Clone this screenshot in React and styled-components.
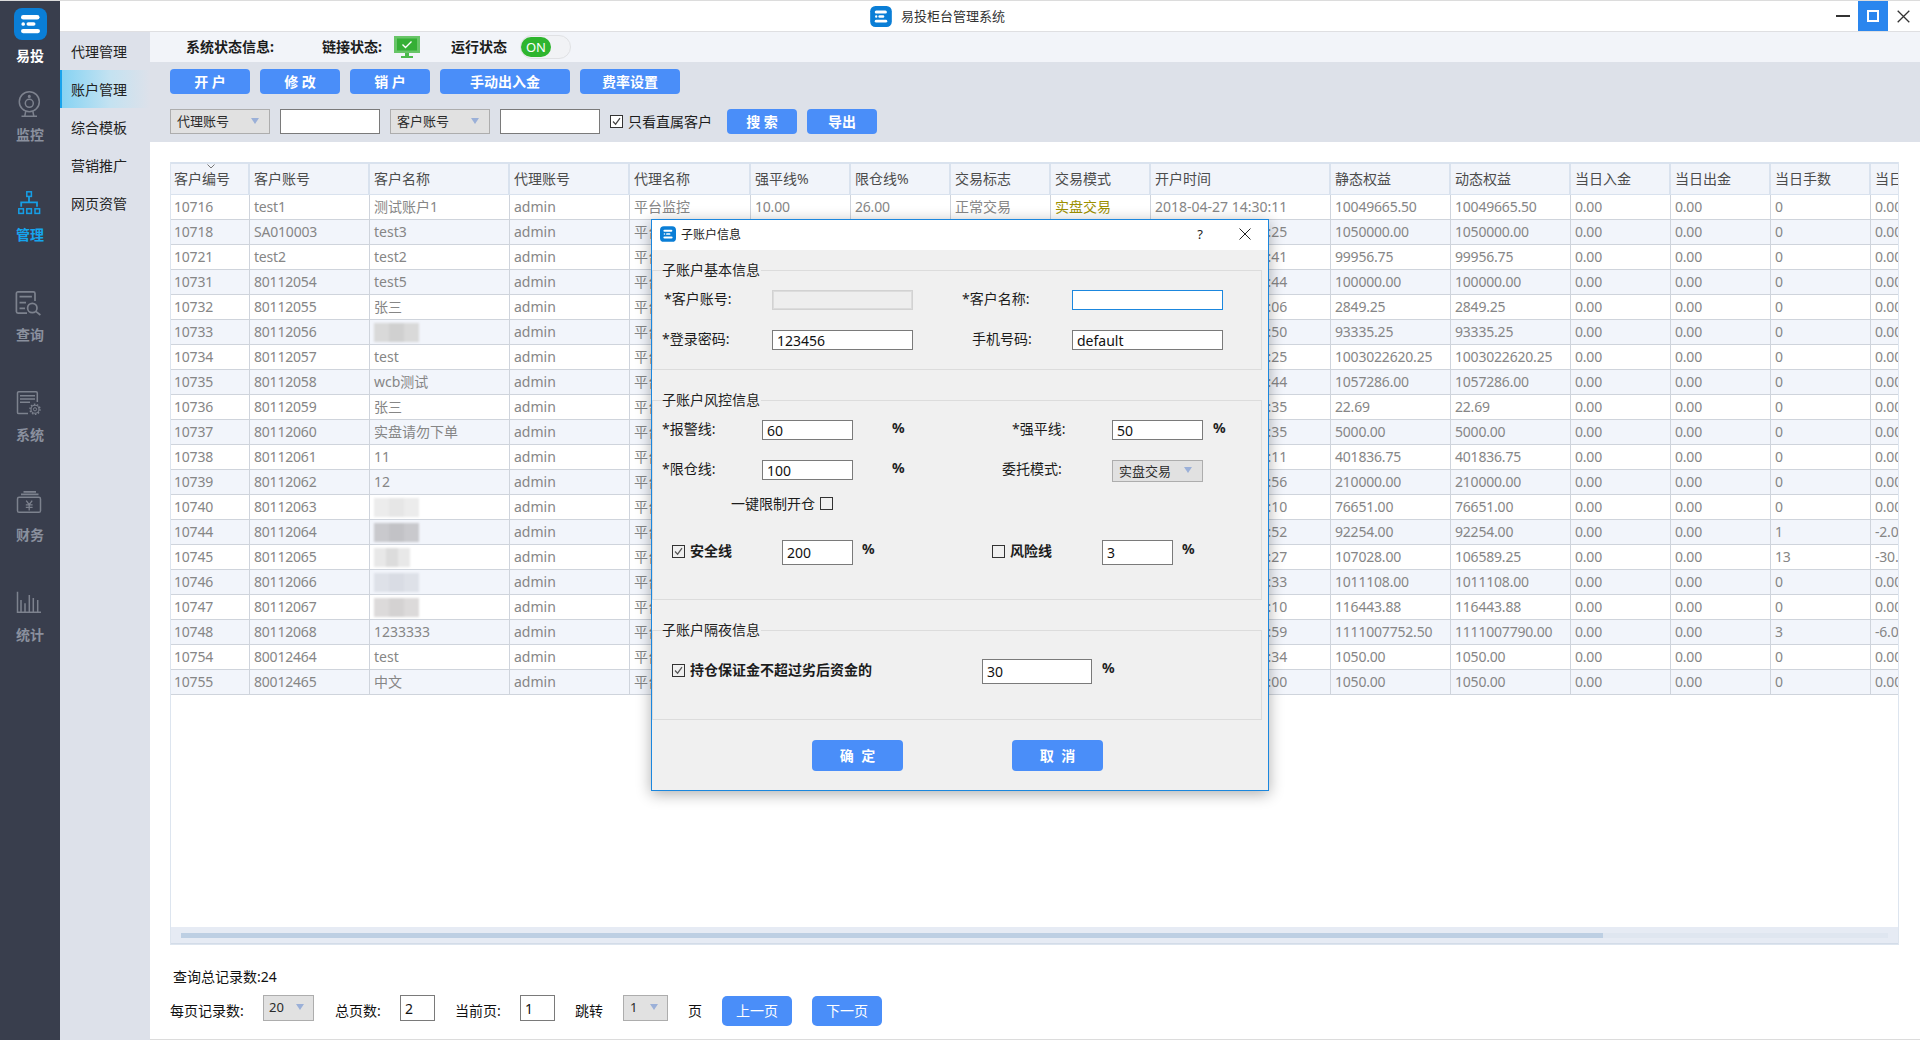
import React from 'react';
import styled, { createGlobalStyle } from 'styled-components';

const Global = createGlobalStyle`
  html, body { margin: 0; padding: 0; background: #fff; }
  * { box-sizing: border-box; }
  body { font-family: "Noto Sans", "Noto Sans CJK SC", sans-serif; font-size: 14px; color: #222; }
`;

const BLUE = '#4a8ef9';

const Root = styled.div`
  position: relative; width: 1920px; height: 1040px; overflow: hidden;
  display: flex; border-top: 1px solid #dcdcdc;
`;
const Sidebar = styled.aside`
  width: 60px; flex: none; background: #393e4d; padding-top: 7px;
  display: flex; flex-direction: column; align-items: center;
`;
const BrandItem = styled.div`
  height: 70px; display: flex; flex-direction: column; align-items: center; gap: 6px;
`;
const SideItem = styled.div`
  height: 100px; width: 60px; padding-top: 12px; display: flex; flex-direction: column; align-items: center;
  color: ${p => (p.$active ? '#16a5ee' : '#8a909e')};
`;
const SideIcon = styled.svg`
  width: 24px; height: 28px; margin-bottom: 7px; overflow: visible; fill: none;
  stroke: ${p => (p.$active ? '#169fe6' : '#7d828e')}; stroke-width: 1.5;
`;
const SideLabel = styled.span`
  font-size: 14px; line-height: 20px; font-weight: 700; color: ${p => (p.$light ? '#fff' : 'inherit')};
`;
const Main = styled.div`flex: 1; display: flex; flex-direction: column; min-width: 0;`;
const TitleBar = styled.header`
  height: 30px; flex: none; background: #fff; display: flex; align-items: center; padding-left: 810px;
`;
const AppTitle = styled.span`font-size: 13px; color: #333; margin-left: 9px; line-height: 18px;`;
const WinControls = styled.div`margin-left: auto; margin-right: 2px; display: flex; height: 30px;`;
const WinBtn = styled.div`
  width: 30px; height: 30px; display: flex; align-items: center; justify-content: center;
  background: ${p => (p.$active ? '#2a86ee' : 'transparent')};
`;
const Work = styled.div`flex: 1; display: flex; min-height: 0; border-top: 1px solid #dfdfe2;`;
const SubNav = styled.nav`width: 90px; flex: none; background: #dde1ea;`;
const SubItem = styled.div`
  height: 38px; padding-left: ${p => (p.$active ? '9px' : '11px')}; display: flex; align-items: center;
  font-size: 14px; color: #222;
  ${p => p.$active && 'border-left: 2px solid #18a3ec; background: linear-gradient(90deg, #86d3f3 0%, #c4e2f1 55%, #dde1ea 100%);'}
`;
const Panel = styled.div`flex: 1; display: flex; flex-direction: column; min-width: 0;`;
const StatusBar = styled.div`
  height: 30px; flex: none; background: #f2f4f9; display: flex; align-items: center; padding-left: 36px;
`;
const StatusText = styled.span`
  width: ${p => p.$w}px; flex: none; font-size: 14px; font-weight: 700; color: #1c1c1c; line-height: 20px; white-space: nowrap;
`;
const ScreenIcon = styled.svg`width: 26px; height: 22px; flex: none; margin-right: 31px;`;
const Toggle = styled.div`
  width: 51px; height: 24px; flex: none; border: 1px solid #e0e1e4; border-radius: 12px; background: #f1f2f5; padding: 1px 0;
`;
const ToggleKnob = styled.div`
  width: 30px; height: 20px; border-radius: 10px; background: #2eb52e; color: #fff; font-size: 13px; line-height: 20px; text-align: center;
`;
const Toolbar = styled.div`
  height: 80px; flex: none; background: #dde1e9; padding: 7px 20px 0; display: flex; flex-direction: column; gap: 15px;
`;
const ToolRow = styled.div`display: flex; gap: 10px; height: 25px; align-items: center;`;
const Action = styled.div`
  width: ${p => p.$w}px; height: 25px; flex: none; border-radius: 4px; background: ${BLUE}; color: #fff;
  font-size: 14px; font-weight: 700; line-height: 25px; text-align: center; white-space: pre;
`;
const ComboBox = styled.div`
  width: ${p => p.$w}px; height: ${p => p.$h || 25}px; flex: none; background: #e1e1e1; border: 1px solid #adadad;
  display: flex; align-items: center; justify-content: space-between; padding: 0 ${p => p.$pr || 10}px 2px ${p => p.$pl || 6}px;
  font-size: 13px; color: #2a2a2a; align-self: flex-start;
`;
const Caret = styled.i`
  display: block; width: 0; height: 0; border-left: 4px solid transparent; border-right: 4px solid transparent;
  border-top: 6px solid #9bb0d8;
`;
const TextField = styled.input`
  width: ${p => p.$w}px; height: ${p => p.$h || 25}px; flex: none; background: ${p => (p.$off ? '#eeeeee' : '#fff')};
  border: 1px solid ${p => (p.$focus ? '#1b87de' : p.$off ? '#d2d2d2' : '#7a7a7a')}; ${p => p.$off && 'outline: 1px solid #dcdcdc; outline-offset: -2px;'}
  padding: 0 0 0 4px; margin: 0; font: 14px "Noto Sans", "Noto Sans CJK SC", sans-serif; color: #111; border-radius: 0; align-self: flex-start;
`;
const BoxMark = styled.span`
  width: 13px; height: 13px; flex: none; display: flex; align-items: center; justify-content: center;
  border: 1px solid #333; background: ${p => p.$bg || 'transparent'}; margin-top: ${p => p.$mt || 0}px;
`;
const CheckText = styled.span`font-size: 14px; color: #1c1c1c; margin-left: ${p => p.$ml || 5}px; line-height: 20px; white-space: nowrap; margin-right: 5px;`;
const Content = styled.div`
  flex: 1; background: #fff; padding: 20px 21px 0 20px; display: flex; flex-direction: column; border-bottom: 1px solid #dcdcdc; min-height: 0;
`;
const TableWrap = styled.div`
  height: 783px; flex: none; border: 1px solid #dde5ef; border-top: 0; display: flex; flex-direction: column; overflow: hidden; position: relative;
`;
const TableBody = styled.div`flex: 1; min-height: 0;`;
const GRID = '79px 120px 140px 120px 121px 100px 100px 100px 100px 180px 120px 120px 100px 100px 100px 100px';
const HeadRow = styled.div`
  display: grid; grid-template-columns: ${GRID}; height: 33px; background: #f1f4fa;
  border-top: 2px solid #d9e2ee; border-bottom: 1px solid #d9e2ee; position: relative;
`;
const HeadCell = styled.div`
  border-right: 2px solid #d9e2ee; padding-left: 4px; line-height: 30px; font-size: 14px; color: #4c4c4c; white-space: nowrap; overflow: hidden;
  &:first-child { padding-left: 3px; }
`;
const SortMark = styled.svg`position: absolute; left: 36px; top: 0; width: 8px; height: 5px;`;
const DataRow = styled.div`
  display: grid; grid-template-columns: ${GRID}; height: 25px; background: ${p => (p.$odd ? '#f2f5fb' : '#fff')}; border-bottom: 1px solid #cfd4dc;
`;
const DataCell = styled.div`
  border-right: 1px solid #cfd4dc; padding-left: 4px; line-height: 24px; font-size: 14px; color: ${p => p.$c || '#868686'}; white-space: nowrap; overflow: hidden;
  letter-spacing: ${p => (p.$num ? '-0.2px' : '0')};
  &:first-child { padding-left: 3px; }
`;
const Smudge = styled.span`
  display: block; width: ${p => p.$w || 45}px; height: 19px; margin: 3px 0 0 0; filter: blur(1px);
  background: linear-gradient(90deg, ${p => p.$a} 0 33%, ${p => p.$b} 33% 66%, ${p => p.$a} 66% 100%);
`;
const ScrollTrack = styled.div`height: 17px; flex: none; background: #e6ebf4; padding: 6px 10px; border-bottom: 1px solid #d3dce8;`;
const ScrollGroove = styled.div`height: 5px; background: #dfe6f0;`;
const ScrollThumb = styled.div`height: 5px; background: #bdcfe3;`;
const TotalLine = styled.div`font-size: 14px; color: #111; margin: 22px 0 8px 3px; line-height: 20px;`;
const Pager = styled.div`display: flex; align-items: center; height: 31px; color: #111;`;
const PagerText = styled.span`margin-left: ${p => p.$ml || 0}px; font-size: 14px; line-height: 20px; white-space: nowrap; width: ${p => p.$w}px; flex: none;`;
const PagerBtn = styled.div`
  width: 70px; height: 30px; flex: none; margin-left: ${p => p.$ml}px; border-radius: 5px; background: ${BLUE}; color: #fff; font-size: 14px;
  line-height: 30px; text-align: center; align-self: flex-end;
`;
const Spaced = styled.div`flex: none; margin-left: ${p => p.$ml}px; align-self: flex-start;`;

const Dialog = styled.section`
  position: absolute; left: 651px; top: 218px; width: 618px; height: 572px; border: 1px solid #1b87de; background: #f0f0f0;
  box-shadow: 0 3px 14px rgba(0,0,0,.32); display: flex; flex-direction: column;
`;
const DialogHead = styled.div`height: 30px; flex: none; background: #fff; display: flex; align-items: center; padding: 0 17px 2px 8px;`;
const DialogTitle = styled.span`font-size: 12px; color: #222; margin-left: 5px;`;
const Help = styled.span`margin-left: auto; margin-right: 36px; font-size: 13px; color: #222;`;
const Group = styled.fieldset`
  position: relative; margin: ${p => p.$mt}px 6px 0 0; height: ${p => p.$h}px; padding: ${p => p.$pt}px 0 0 0;
  border: 1px solid #dcdcdc; min-width: 0; display: block;
`;
const GroupTitle = styled.span`
  position: absolute; left: 9px; top: -11px; background: #f0f0f0; font-size: 14px; line-height: 20px; color: #222; padding-right: 1px;
`;
const FormRow = styled.div`display: flex; align-items: center; height: ${p => p.$h || 20}px; margin-top: ${p => p.$mt || 0}px;`;
const FieldLabel = styled.span`
  width: ${p => p.$w}px; padding-left: ${p => p.$pl}px; flex: none; font-size: 14px; color: #1c1c1c; line-height: 20px; white-space: nowrap; margin-top: -3px;
`;
const Pct = styled.span`
  width: ${p => p.$w}px; padding-left: ${p => p.$pl}px; flex: none; font-size: 14px; font-weight: 700; color: #222; line-height: 20px; margin-top: ${p => p.$mt ?? -5}px;
`;
const BoldLabel = styled.span`
  width: ${p => p.$w}px; margin-left: 5px; flex: none; font-size: 14px; font-weight: 700; color: #1c1c1c; line-height: 20px; margin-top: -4px; white-space: nowrap;
`;
const CheckSlot = styled.span`flex: none; margin-left: ${p => p.$ml || 0}px; display: flex;`;
const DialogActions = styled.div`display: flex; gap: 109px; margin: 20px 0 0 160px;`;
const DialogBtn = styled.div`
  width: 91px; height: 31px; border-radius: 4px; background: ${BLUE}; color: #fff; font-size: 14px; font-weight: 700; line-height: 31px; text-align: center; white-space: pre;
`;

const Logo = ({ w, h }) => (
  <svg width={w} height={h} viewBox="0 0 33 32">
    <rect width="33" height="32" rx="8" fill="#0a7ed6" />
    <rect x="7" y="7" width="18.5" height="4.6" rx="2.3" fill="#fff" />
    <rect x="7.5" y="14.2" width="3.4" height="3.6" rx="1.6" fill="#fff" />
    <rect x="12.5" y="14.2" width="9" height="3.6" rx="1.8" fill="#fff" />
    <rect x="7" y="21" width="19" height="4.2" rx="2.1" fill="#fff" />
  </svg>
);
const Check = ({ on }) => (
  <BoxMark $mt={-3}>{on && (
    <svg width="9" height="9" viewBox="0 0 9 9"><path d="M1 4.5L3.6 7.2 8 1.2" fill="none" stroke="#555" strokeWidth="1.2" /></svg>
  )}</BoxMark>
);

const icons = {
  monitor: (
    <>
      <circle cx="11.3" cy="11.7" r="10" />
      <circle cx="11.3" cy="13.3" r="4" />
      <circle cx="11.3" cy="6.4" r=".8" />
      <path d="M7.8 21l-1 5M14.8 21l1 5M3.5 26.2h15.5" />
    </>
  ),
  manage: (
    <>
      <rect x="8.8" y="1.8" width="4.6" height="4.6" />
      <path d="M11 6.4V12M3.2 16.8V12.4H19V16.8" strokeWidth="1.8" />
      <rect x=".8" y="18.8" width="4.6" height="4.6" />
      <rect x="8.8" y="18.8" width="4.6" height="4.6" />
      <rect x="17" y="18.8" width="4.6" height="4.6" />
    </>
  ),
  query: (
    <>
      <path d="M9 23.2H0a1.6 1.6 0 0 1-1.6-1.6V3.4A1.6 1.6 0 0 1 0 1.8h15.4a1.6 1.6 0 0 1 1.6 1.6V11" strokeWidth="1.7" />
      <path d="M1.5 6.7h12.4M1.5 12.7H8M1.5 18.3H7" strokeWidth="1.7" />
      <circle cx="14.3" cy="18" r="4.7" strokeWidth="1.7" />
      <path d="M17.8 21.4l4.6 3.6" strokeWidth="1.7" />
    </>
  ),
  system: (
    <>
      <path d="M10 23.6H.7A1.2 1.2 0 0 1-.5 22.4V3A1.2 1.2 0 0 1 .7 1.8h17.4A1.2 1.2 0 0 1 19.3 3V12" />
      <path d="M2 5.7h15M2 9h15M2 12.3h10" />
      <circle cx="17" cy="19.3" r="4" strokeWidth="1.1" />
      <circle cx="17" cy="19.3" r="5" strokeWidth="1.4" strokeDasharray="1.6 1.5" />
      <circle cx="17" cy="19.3" r="1.6" strokeWidth="1" />
    </>
  ),
  finance: (
    <>
      <path d="M5.5 1.8h12.5M3 4.4h17.5" strokeWidth="1.7" />
      <rect x="-.5" y="7.3" width="23" height="15" rx="1.6" />
      <path d="M8.2 10.6l3 4 3-4M7.8 14.8h6.8M7.8 17.4h6.8M11.2 14.6v6" strokeWidth="1.3" />
    </>
  ),
  stats: (
    <path d="M-.5 1.7V22.2H23M3 22V10M7 22V13.3M11.3 22V5M15.3 22V8M19.7 22V10" />
  ),
};

const sideItems = [
  ['monitor', '监控'], ['manage', '管理', true], ['query', '查询'], ['system', '系统'], ['finance', '财务'], ['stats', '统计'],
];
const subItems = ['代理管理', '账户管理', '综合模板', '营销推广', '网页资管'];
const heads = ['客户编号', '客户账号', '客户名称', '代理账号', '代理名称', '强平线%', '限仓线%', '交易标志', '交易模式', '开户时间', '静态权益', '动态权益', '当日入金', '当日出金', '当日手数', '当日盈亏'];

const tones = {
  a: ['#d9d9d9', '#d0d0d0'], b: ['#ececec', '#e6e6e6'], c: ['#c9c9cd', '#c2c2c6'], d: ['#e8e8e8', '#dcdcdc'], e: ['#dee1e8', '#d9dce4'], f: ['#dcdada', '#d4d2d2'],
};
const rows = [
  ['10716', 'test1', '测试账户1', '11', '10049665.50', '10049665.50'],
  ['10718', 'SA010003', 'test3', '25', '1050000.00', '1050000.00'],
  ['10721', 'test2', 'test2', '41', '99956.75', '99956.75'],
  ['10731', '80112054', 'test5', '44', '100000.00', '100000.00'],
  ['10732', '80112055', '张三', '06', '2849.25', '2849.25'],
  ['10733', '80112056', { t: 'a' }, '50', '93335.25', '93335.25'],
  ['10734', '80112057', 'test', '25', '1003022620.25', '1003022620.25'],
  ['10735', '80112058', 'wcb测试', '44', '1057286.00', '1057286.00'],
  ['10736', '80112059', '张三', '35', '22.69', '22.69'],
  ['10737', '80112060', '实盘请勿下单', '35', '5000.00', '5000.00'],
  ['10738', '80112061', '11', '11', '401836.75', '401836.75'],
  ['10739', '80112062', '12', '56', '210000.00', '210000.00'],
  ['10740', '80112063', { t: 'b' }, '10', '76651.00', '76651.00'],
  ['10744', '80112064', { t: 'c' }, '52', '92254.00', '92254.00', '1', '-2.08'],
  ['10745', '80112065', { t: 'd', w: 36 }, '27', '107028.00', '106589.25', '13', '-30.50'],
  ['10746', '80112066', { t: 'e' }, '33', '1011108.00', '1011108.00'],
  ['10747', '80112067', { t: 'f' }, '10', '116443.88', '116443.88'],
  ['10748', '80112068', '1233333', '59', '1111007752.50', '1111007790.00', '3', '-6.08'],
  ['10754', '80012464', 'test', '34', '1050.00', '1050.00'],
  ['10755', '80012465', '中文', '00', '1050.00', '1050.00'],
];

export default function App() {
  return (
    <Root>
      <Global />
      <Sidebar>
        <BrandItem>
          <Logo w={33} h={32} />
          <SideLabel $light>易投</SideLabel>
        </BrandItem>
        {sideItems.map(([k, label, active]) => (
          <SideItem key={k} $active={active}>
            <SideIcon $active={active} viewBox="0 0 24 28">{icons[k]}</SideIcon>
            <SideLabel>{label}</SideLabel>
          </SideItem>
        ))}
      </Sidebar>
      <Main>
        <TitleBar>
          <Logo w={22} h={21} />
          <AppTitle>易投柜台管理系统</AppTitle>
          <WinControls>
            <WinBtn>
              <svg width="14" height="2" viewBox="0 0 14 2"><rect width="14" height="2" fill="#333" /></svg>
            </WinBtn>
            <WinBtn $active>
              <svg width="12" height="12" viewBox="0 0 12 12"><rect x="1" y="1" width="10" height="10" fill="none" stroke="#fff" strokeWidth="2" /></svg>
            </WinBtn>
            <WinBtn>
              <svg width="13" height="13" viewBox="0 0 13 13"><path d="M.7.7l11.6 11.6M12.3.7L.7 12.3" stroke="#333" strokeWidth="1.3" /></svg>
            </WinBtn>
          </WinControls>
        </TitleBar>
        <Work>
          <SubNav>
            {subItems.map((s, i) => <SubItem key={s} $active={i === 1}>{s}</SubItem>)}
          </SubNav>
          <Panel>
            <StatusBar>
              <StatusText $w={136}>系统状态信息:</StatusText>
              <StatusText $w={72}>链接状态:</StatusText>
              <ScreenIcon viewBox="0 0 26 22">
                <rect width="26" height="17" fill="#68c568" />
                <rect x="3" y="2.5" width="20" height="12" fill="#35af35" />
                <path d="M8.5 8.5l3 3 6-6" fill="none" stroke="#fff" strokeWidth="1.4" />
                <rect x="11" y="17" width="4" height="3" fill="#4dba4d" />
                <rect x="7" y="20" width="12" height="2" fill="#4dba4d" />
              </ScreenIcon>
              <StatusText $w={69}>运行状态</StatusText>
              <Toggle><ToggleKnob>ON</ToggleKnob></Toggle>
            </StatusBar>
            <Toolbar>
              <ToolRow>
                <Action $w={80}>开 户</Action>
                <Action $w={80}>修 改</Action>
                <Action $w={80}>销 户</Action>
                <Action $w={130}>手动出入金</Action>
                <Action $w={100}>费率设置</Action>
              </ToolRow>
              <ToolRow>
                <ComboBox $w={100}>代理账号<Caret /></ComboBox>
                <TextField $w={100} readOnly />
                <ComboBox $w={100}>客户账号<Caret /></ComboBox>
                <TextField $w={100} readOnly />
                <BoxMark $bg="#fff">
                  <svg width="9" height="9" viewBox="0 0 9 9"><path d="M1 4.5L3.6 7.2 8 1.2" fill="none" stroke="#444" strokeWidth="1.2" /></svg>
                </BoxMark>
                <CheckText $ml={-5}>只看直属客户</CheckText>
                <Action $w={70}>搜 索</Action>
                <Action $w={70}>导出</Action>
              </ToolRow>
            </Toolbar>
            <Content>
              <TableWrap>
                <TableBody>
                  <HeadRow>
                    {heads.map(h => <HeadCell key={h}>{h}</HeadCell>)}
                    <SortMark viewBox="0 0 8 5"><path d="M.5.5L4 4 7.5.5" fill="none" stroke="#777" /></SortMark>
                  </HeadRow>
                  {rows.map((r, i) => (
                    <DataRow key={r[0]} $odd={i % 2 === 1}>
                      <DataCell $num>{r[0]}</DataCell>
                      <DataCell $num>{r[1]}</DataCell>
                      <DataCell>
                        {typeof r[2] === 'string' ? r[2] : <Smudge $a={tones[r[2].t][0]} $b={tones[r[2].t][1]} $w={r[2].w} />}
                      </DataCell>
                      <DataCell>admin</DataCell>
                      <DataCell>平台监控</DataCell>
                      <DataCell $num>10.00</DataCell>
                      <DataCell $num>26.00</DataCell>
                      <DataCell>正常交易</DataCell>
                      <DataCell $c="#9c9000">实盘交易</DataCell>
                      <DataCell>2018-04-27 14:30:{r[3]}</DataCell>
                      <DataCell $num>{r[4]}</DataCell>
                      <DataCell $num>{r[5]}</DataCell>
                      <DataCell $num>0.00</DataCell>
                      <DataCell $num>0.00</DataCell>
                      <DataCell $num>{r[6] || '0'}</DataCell>
                      <DataCell $num>{r[7] || '0.00'}</DataCell>
                    </DataRow>
                  ))}
                </TableBody>
                <ScrollTrack>
                  <ScrollGroove>
                    <ScrollThumb style={{ width: `${(1422 / 1707) * 100}%` }} />
                  </ScrollGroove>
                </ScrollTrack>
              </TableWrap>
              <TotalLine>查询总记录数:24</TotalLine>
              <Pager>
                <PagerText $w={74}>每页记录数:</PagerText>
                <Spaced $ml={19}><ComboBox $w={51} $h={26} $pl={5} $pr={9}>20<Caret /></ComboBox></Spaced>
                <PagerText $ml={21} $w={65}>总页数:</PagerText>
                <Spaced $ml={0}><TextField $w={35} $h={26} value="2" readOnly /></Spaced>
                <PagerText $ml={20} $w={65}>当前页:</PagerText>
                <Spaced $ml={0}><TextField $w={35} $h={26} value="1" readOnly /></Spaced>
                <PagerText $ml={20} $w={48}>跳转</PagerText>
                <Spaced $ml={0}><ComboBox $w={45} $h={26} $pl={6} $pr={9}>1<Caret /></ComboBox></Spaced>
                <PagerText $ml={20} $w={14}>页</PagerText>
                <PagerBtn $ml={20}>上一页</PagerBtn>
                <PagerBtn $ml={20}>下一页</PagerBtn>
              </Pager>
            </Content>
          </Panel>
        </Work>
      </Main>

      <Dialog>
        <DialogHead>
          <Logo w={16} h={16} />
          <DialogTitle>子账户信息</DialogTitle>
          <Help>?</Help>
          <svg width="12" height="12" viewBox="0 0 12 12"><path d="M.5.5l11 11M11.5.5l-11 11" stroke="#222" strokeWidth="1" /></svg>
        </DialogHead>
        <Group $mt={20} $h={100} $pt={19}>
          <GroupTitle>子账户基本信息</GroupTitle>
          <FormRow>
            <FieldLabel $w={119} $pl={11}>*客户账号:</FieldLabel>
            <TextField $w={141} $h={20} $off readOnly />
            <FieldLabel $w={159} $pl={49}>*客户名称:</FieldLabel>
            <TextField $w={151} $h={20} $focus readOnly />
          </FormRow>
          <FormRow $mt={20}>
            <FieldLabel $w={119} $pl={9}>*登录密码:</FieldLabel>
            <TextField $w={141} $h={20} value="123456" readOnly />
            <FieldLabel $w={159} $pl={59}>手机号码:</FieldLabel>
            <TextField $w={151} $h={20} value="default" readOnly />
          </FormRow>
        </Group>
        <Group $mt={30} $h={200} $pt={19}>
          <GroupTitle>子账户风控信息</GroupTitle>
          <FormRow>
            <FieldLabel $w={109} $pl={9}>*报警线:</FieldLabel>
            <TextField $w={91} $h={20} value="60" readOnly />
            <Pct $w={100} $pl={39}>%</Pct>
            <FieldLabel $w={159} $pl={59}>*强平线:</FieldLabel>
            <TextField $w={91} $h={20} value="50" readOnly />
            <Pct $w={30} $pl={10}>%</Pct>
          </FormRow>
          <FormRow $mt={20}>
            <FieldLabel $w={109} $pl={9}>*限仓线:</FieldLabel>
            <TextField $w={91} $h={20} value="100" readOnly />
            <Pct $w={100} $pl={39}>%</Pct>
            <FieldLabel $w={159} $pl={49}>委托模式:</FieldLabel>
            <ComboBox $w={91} $h={22}>实盘交易<Caret /></ComboBox>
          </FormRow>
          <FormRow $mt={15}>
            <FieldLabel $w={167} $pl={78}>一键限制开仓</FieldLabel>
            <Check />
          </FormRow>
          <FormRow $mt={25} $h={25}>
            <CheckSlot $ml={19}><Check on /></CheckSlot>
            <BoldLabel $w={92}>安全线</BoldLabel>
            <TextField $w={71} $h={25} value="200" readOnly />
            <Pct $w={139} $pl={9} $mt={-7}>%</Pct>
            <Check />
            <BoldLabel $w={92}>风险线</BoldLabel>
            <TextField $w={71} $h={25} value="3" readOnly />
            <Pct $w={30} $pl={9} $mt={-7}>%</Pct>
          </FormRow>
        </Group>
        <Group $mt={30} $h={90} $pt={28}>
          <GroupTitle>子账户隔夜信息</GroupTitle>
          <FormRow $h={25}>
            <CheckSlot $ml={19}><Check on /></CheckSlot>
            <BoldLabel $w={292}>持仓保证金不超过劣后资金的</BoldLabel>
            <TextField $w={110} $h={25} value="30" readOnly />
            <Pct $w={30} $pl={10} $mt={-7}>%</Pct>
          </FormRow>
        </Group>
        <DialogActions>
          <DialogBtn>确  定</DialogBtn>
          <DialogBtn>取  消</DialogBtn>
        </DialogActions>
      </Dialog>
    </Root>
  );
}
